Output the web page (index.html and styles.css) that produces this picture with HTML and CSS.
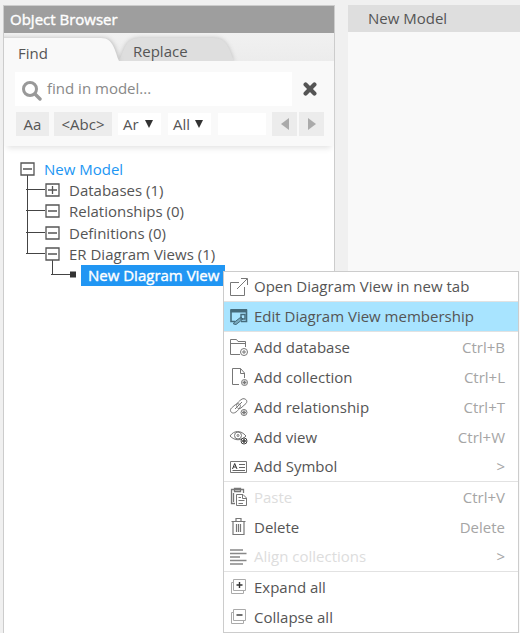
FILE: index.html
```
<!DOCTYPE html>
<html lang="en">
<head>
<meta charset="utf-8">
<title>Object Browser</title>
<link rel="stylesheet" href="styles.css">
</head>
<body>
<main class="app">
  <section class="browser">
    <h1 class="browser-title">Object Browser</h1>
    <div class="tabs">
      <svg class="tab-shapes" width="330" height="28" viewBox="0 0 330 28">
        <path class="tab-back" d="M114 28C121 20 119 5 136 5H210C224 5 226 19 230 28Z"/>
        <path class="tab-front" d="M-5 5H97C110 5 111 19 115 28H-5Z"/>
      </svg>
      <span class="tab tab-find">Find</span>
      <span class="tab tab-replace">Replace</span>
    </div>
    <div class="search">
      <div class="search-row">
        <div class="search-input">
          <svg width="20" height="20" viewBox="0 0 20 20"><circle cx="8" cy="8" r="6.5" fill="none" stroke="#999" stroke-width="3"/><path d="M13 13L18 18" stroke="#999" stroke-width="3.4" stroke-linecap="round"/></svg>
          <span>find in model...</span>
        </div>
        <svg class="clear" width="14" height="14" viewBox="0 0 14 14"><path d="M2.6 2.6L11.400 11.400M11.400 2.600L2.600 11.400" stroke="#555" stroke-width="4.200" stroke-linecap="round"/></svg>
      </div>
      <div class="filters">
        <span class="chip chip-case">Aa</span>
        <span class="chip chip-word">&lt;Abc&gt;</span>
        <span class="select">Ar<i class="caret"></i></span>
        <span class="select">All<i class="caret"></i></span>
        <span class="blank"></span>
        <span class="nav"><svg width="8" height="12" viewBox="0 0 8 12"><path d="M8 0V12L0 6Z" fill="#aaa"/></svg></span>
        <span class="nav nav-next"><svg width="8" height="12" viewBox="0 0 8 12"><path d="M0 0V12L8 6Z" fill="#aaa"/></svg></span>
      </div>
    </div>
    <div class="tree">
      <svg class="tree-lines" width="80" height="130" viewBox="0 0 80 130" fill="none" stroke="#444">
        <path d="M23.500 23V101.500H41M22 37.500H41M22 58.500H41M22 80.500H41M22 101.500H41M48.500 108V122.500H66M47 122.500H66"/>
        <path d="M66 119.500H72V125.500H66Z" fill="#333" stroke="none"/>
        <g stroke="#555" stroke-width="1.3">
          <path d="M17 11H30V23H17ZM42 32H55V44H42ZM42 53H55V65H42ZM42 75H55V87H42ZM42 96H55V108H42Z" fill="#fff"/>
          <path d="M19 17H28M44 38H53M48.500 34V42M44 59H53M44 81H53M44 102H53"/>
        </g>
      </svg>
      <div class="node root">New Model</div>
      <div class="node child">Databases (1)</div>
      <div class="node child">Relationships (0)</div>
      <div class="node child lower">Definitions (0)</div>
      <div class="node child">ER Diagram Views (1)</div>
      <div class="node leaf"><span>New Diagram View</span></div>
    </div>
  </section>
  <section class="editor"><div class="editor-tab">New Model</div></section>
</main>
<nav class="menu">
  <div class="item short"><svg class="icon" viewBox="0 0 20 20"><path d="M10 5.500H1.500V18.500H15.500V10M8 12L18 2M12 1.500H18.500V8"/></svg><span>Open Diagram View in new tab</span></div>
  <div class="item short line active"><svg class="icon" viewBox="0 0 20 20"><path d="M17.500 2.500V14.500H12M6 14.500H2V2.500" stroke-width="1.600"/><path d="M1.500 2H18V5.500H1.500Z" fill="#456b7b" stroke="none"/><path d="M5 15.500L12 10L14 12L7 17.500L4.500 17Z" fill="#78a9be"/><path d="M12 7.500H16V12H12Z" stroke-width="1.400"/></svg><span>Edit Diagram View membership</span></div>
  <div class="item line"><svg class="icon" viewBox="0 0 20 20"><path d="M11 17.500H1.500V2.500H7.500L9 4.500H16.500V10M1.500 6.500H16.500"/><circle cx="15" cy="15" r="3.500"/><path d="M13 15H17M15 13V17"/></svg><span>Add database</span><kbd>Ctrl+B</kbd></div>
  <div class="item"><svg class="icon" viewBox="0 0 20 20"><path d="M10 17.500H3.500V1.500H11.500L15.500 6V11M11.500 1.500V6.500H15.500"/><circle cx="15.500" cy="15.500" r="3"/><path d="M13.500 15.500H17.500M15.500 13.500V17.500" stroke-width="1.500"/></svg><span>Add collection</span><kbd>Ctrl+L</kbd></div>
  <div class="item"><svg class="icon" viewBox="0 0 20 20"><path d="M7.500 9.500C6 7.500 12 2 14 1.700C17 1.500 19 4 17 6.500L12 11C10.500 12 8.500 11.500 8 10.500M11 7.500C13 9.500 7.500 16 4.500 16C1.500 16 .5 13 2.500 11L6.500 7.500C8 6.500 10 6.700 11 7.500M6 12L13 5"/><circle cx="15" cy="15.500" r="3"/><path d="M13 15.500H17M15 13.500V17.500" stroke-width="1.500"/></svg><span>Add relationship</span><kbd>Ctrl+T</kbd></div>
  <div class="item"><svg class="icon" viewBox="0 0 20 20"><path d="M1 9C5 3 12 3 17 9C12 14 6 14 1 9Z"/><circle cx="9" cy="8.500" r="3.500"/><circle cx="9" cy="8.500" r="1"/><circle cx="15" cy="14" r="3" fill="#fff" stroke="#444"/><path d="M13 14H17M15 12V16" stroke="#444" stroke-width="1.500"/></svg><span>Add view</span><kbd>Ctrl+W</kbd></div>
  <div class="item short"><svg class="icon" viewBox="0 0 20 20"><path d="M1.500 4.500H17.500V15.500H1.500Z"/><path d="M3.500 12L5.700 6.500L8 12M4.500 10H7" stroke="#333"/><path d="M10 7.500H16M10 10.500H16M3.500 13.500H16" stroke="#666"/></svg><span>Add Symbol</span><kbd class="more">&gt;</kbd></div>
  <div class="item line disabled"><svg class="icon" viewBox="0 0 20 20"><path d="M6 16.500H2.500V2.500H14.500V6M5.500 4.500V1.500H11.500V4.500ZM4.500 6V15" stroke-width="1.300"/><path d="M7.500 7.500H14L17.500 11V18.500H7.500ZM13.500 7.500V11.500H17M9.500 13.500H15.500M9.500 16.500H14M9.500 10.500H12" fill="#fff"/></svg><span>Paste</span><kbd>Ctrl+V</kbd></div>
  <div class="item"><svg class="icon" viewBox="0 0 20 20" stroke-width="1.200"><path d="M2.500 4.500H16.500M7 4V1.500H12V4M4 5V17.500H15V5M7.500 7V15M9.500 7V15M11.500 7V15"/></svg><span>Delete</span><kbd>Delete</kbd></div>
  <div class="item short disabled"><svg class="icon" viewBox="0 0 20 20"><path d="M1 3H14M1 6.500H17.500M1 10H11M1 13.500H17.500M1 17H14" stroke="#888" stroke-width="1.500"/></svg><span>Align collections</span><kbd class="more">&gt;</kbd></div>
  <div class="item line"><svg class="icon pale" viewBox="0 0 20 20"><path d="M4.500 2.500H16.500V13.500H4.500ZM4 5.500H2.500V16.500H14.500V14"/><path d="M7.500 8H13.500M10.500 5V11" stroke="#333" stroke-width="1.400"/></svg><span>Expand all</span></div>
  <div class="item"><svg class="icon pale" viewBox="0 0 20 20"><path d="M4.500 2.500H16.500V13.500H4.500ZM4 5.500H2.500V16.500H14.500V14"/><path d="M7.500 8H13.500" stroke="#333" stroke-width="1.400"/></svg><span>Collapse all</span></div>
</nav>
</body>
</html>
```
FILE: styles.css
```
* { box-sizing: border-box; }
body { margin: 0; height: 633px; overflow: hidden; background: #f0f0f0; color: #555; font: 15px/21px "Open Sans", sans-serif; }
svg { display: block; flex: none; }
.app { display: flex; gap: 13px; height: 633px; padding: 5px 0 0 3px; }
.browser { width: 332px; flex: none; background: #fff; border: 1px solid #ccc; border-bottom: 0; }
.browser-title { margin: 0; height: 27px; padding-left: 6px; background: #9e9e9e; color: #fff; font-size: 15px; font-weight: 400; line-height: 27px; -webkit-text-stroke: .4px #fff; }
.tabs { position: relative; display: flex; height: 28px; background: linear-gradient(#f1f1f1, #ececec); }
.tab-shapes { position: absolute; inset: 0; overflow: hidden; }
.tab-back { fill: #dedede; filter: drop-shadow(0 0 2px #bbb); }
.tab-front { fill: #f9f9f9; filter: drop-shadow(1px 0 2px #bbb); }
.tab { position: relative; line-height: 21px; }
.tab-find { width: 115px; padding: 10px 0 0 14px; }
.tab-replace { padding: 8px 0 0 14px; }
.search { position: relative; height: 85px; padding: 11px 10px 0 11px; background: #f9f9f9; box-shadow: 0 5px 6px -3px #e2e2e2; }
.search-row { display: flex; align-items: center; }
.search-input { display: flex; align-items: center; gap: 6px; width: 277px; height: 34px; padding-left: 7px; background: #fff; color: #888; line-height: 19px; }
.search-input svg { margin-top: 3px; }
.search-input span { margin: -2px 0 0 -1px; }
.clear { margin-left: 11px; margin-top: -1px; }
.filters { display: flex; align-items: center; height: 24px; margin-top: 6px; padding-left: 1px; }
.chip, .nav { display: flex; align-items: center; justify-content: center; height: 24px; background: #ececec; }
.chip-case { width: 33px; }
.chip-word { width: 58px; margin: 0 6px 0 5px; }
.select { display: flex; align-items: center; width: 43px; height: 22px; margin-right: 7px; padding-left: 5px; background: #fff; }
.caret { margin-left: auto; margin-right: 8px; border: solid transparent; border-width: 8px 4px 0; border-top-color: #333; }
.blank { width: 48px; height: 22px; margin-right: 6px; background: #fff; }
.nav { width: 25px; }
.nav-next { margin-left: 2px; }
.tree { position: relative; padding-top: 13px; }
.tree-lines { position: absolute; left: 0; top: 6px; }
.node { height: 21px; }
.root { padding-left: 40px; color: #2196f3; }
.child { padding-left: 65px; }
.lower { height: 22px; padding-top: 1px; }
.leaf { padding-left: 77px; }
.leaf span { display: block; width: 144px; padding-left: 7px; background: #2196f3; color: #fff; -webkit-text-stroke: .4px #fff; }
.editor { flex: 1; background: #f9f9f9; }
.editor-tab { height: 27px; padding-left: 20px; background: #dedede; line-height: 27px; }
.menu { position: absolute; left: 223px; top: 271px; width: 296px; height: 362px; background: #fff; border: 1px solid #ccc; }
.item { display: flex; align-items: center; height: 30px; padding: 0 13px 0 5px; }
.item span { padding-left: 5px; }
.item kbd { margin-left: auto; color: #a5a5a5; font: inherit; }
.item .more { font-size: 15px; }
.short { height: 29px; }
.line { box-shadow: 0 -1px #e2e2e2; margin-top: 1px; }
.active { background: #a8e4ff; }
.disabled span { color: #ddd; }
.icon { width: 20px; height: 20px; fill: none; stroke: #777; }
.active .icon { stroke: #456b7b; }
.pale { stroke: #aaa; }
```
